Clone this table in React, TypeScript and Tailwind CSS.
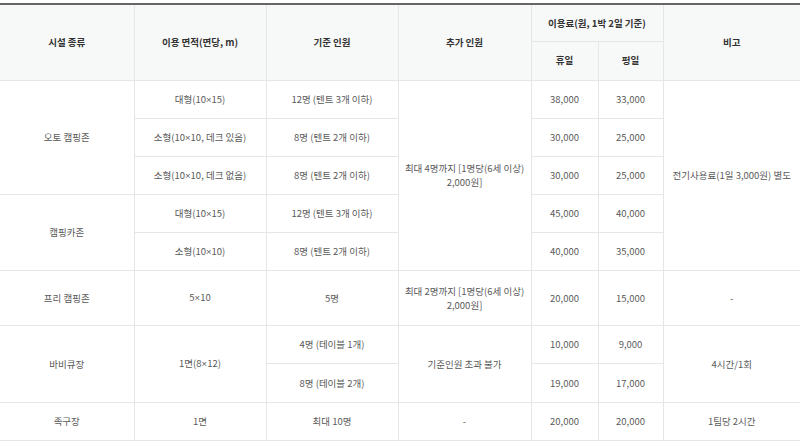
import React from "react";

const td = "border border-[#e6e6e6] text-center align-middle px-1 leading-[14px]";
const th = "border border-[#e6e6e6] text-center align-middle font-bold text-[#333] px-1";

const X = () => <span className="font-['Liberation_Sans']">×</span>;

export default function App() {
  return (
    <div
      className="w-[800px] h-[446px] bg-white pt-[3px] text-[9.5px] text-[#5a5a5a]"
      style={{ fontFamily: '"Noto Sans CJK KR", "Noto Sans", sans-serif' }}
    >
      <table className="w-[800px] table-fixed border-collapse border-t-2 border-t-[#666] [&_td:first-child]:border-l-0 [&_th:first-child]:border-l-0">
        <colgroup>
          <col className="w-[134px]" />
          <col className="w-[132px]" />
          <col className="w-[132px]" />
          <col className="w-[133px]" />
          <col className="w-[67px]" />
          <col className="w-[65px]" />
          <col className="w-[137px]" />
        </colgroup>
        <thead className="bg-[#f7f8f8]">
          <tr className="h-[37px]">
            <th rowSpan={2} className={th}>시설 종류</th>
            <th rowSpan={2} className={th}>이용 면적(면당, m)</th>
            <th rowSpan={2} className={th}>기준 인원</th>
            <th rowSpan={2} className={th}>추가 인원</th>
            <th colSpan={2} className={th}>이용료(원, 1박 2일 기준)</th>
            <th rowSpan={2} className={`${th} border-r-0`}>비고</th>
          </tr>
          <tr className="h-[39px]">
            <th className={th}>휴일</th>
            <th className={th}>평일</th>
          </tr>
        </thead>
        <tbody>
          <tr className="h-[38px]">
            <td rowSpan={3} className={td}>오토 캠핑존</td>
            <td className={td}>대형(10<X />15)</td>
            <td className={td}>12명 (텐트 3개 이하)</td>
            <td rowSpan={5} className={td}>최대 4명까지 [1명당(6세 이상)<br />2,000원]</td>
            <td className={td}>38,000</td>
            <td className={td}>33,000</td>
            <td rowSpan={5} className={`${td} border-r-0`}>전기사용료(1일 3,000원) 별도</td>
          </tr>
          <tr className="h-[38px]">
            <td className={td}>소형(10<X />10, 데크 있음)</td>
            <td className={td}>8명 (텐트 2개 이하)</td>
            <td className={td}>30,000</td>
            <td className={td}>25,000</td>
          </tr>
          <tr className="h-[38px]">
            <td className={td}>소형(10<X />10, 데크 없음)</td>
            <td className={td}>8명 (텐트 2개 이하)</td>
            <td className={td}>30,000</td>
            <td className={td}>25,000</td>
          </tr>
          <tr className="h-[38px]">
            <td rowSpan={2} className={td}>캠핑카존</td>
            <td className={td}>대형(10<X />15)</td>
            <td className={td}>12명 (텐트 3개 이하)</td>
            <td className={td}>45,000</td>
            <td className={td}>40,000</td>
          </tr>
          <tr className="h-[38px]">
            <td className={td}>소형(10<X />10)</td>
            <td className={td}>8명 (텐트 2개 이하)</td>
            <td className={td}>40,000</td>
            <td className={td}>35,000</td>
          </tr>
          <tr className="h-[55px]">
            <td className={td}>프리 캠핑존</td>
            <td className={td}>5<X />10</td>
            <td className={td}>5명</td>
            <td className={td}>최대 2명까지 [1명당(6세 이상)<br />2,000원]</td>
            <td className={td}>20,000</td>
            <td className={td}>15,000</td>
            <td className={`${td} border-r-0`}>-</td>
          </tr>
          <tr className="h-[38px]">
            <td rowSpan={2} className={td}>바비큐장</td>
            <td rowSpan={2} className={td}>1면(8<X />12)</td>
            <td className={td}>4명 (테이블 1개)</td>
            <td rowSpan={2} className={td}>기준인원 초과 불가</td>
            <td className={td}>10,000</td>
            <td className={td}>9,000</td>
            <td rowSpan={2} className={`${td} border-r-0`}>4시간/1회</td>
          </tr>
          <tr className="h-[39px]">
            <td className={td}>8명 (테이블 2개)</td>
            <td className={td}>19,000</td>
            <td className={td}>17,000</td>
          </tr>
          <tr className="h-[38px]">
            <td className={td}>족구장</td>
            <td className={td}>1면</td>
            <td className={td}>최대 10명</td>
            <td className={td}>-</td>
            <td className={td}>20,000</td>
            <td className={td}>20,000</td>
            <td className={`${td} border-r-0`}>1팀당 2시간</td>
          </tr>
        </tbody>
      </table>
    </div>
  );
}
